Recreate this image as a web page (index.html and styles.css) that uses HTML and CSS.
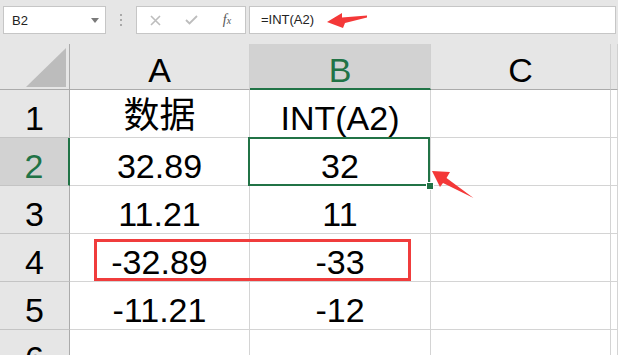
FILE: index.html
```html
<!DOCTYPE html>
<html lang="zh-CN">
<head>
    <meta charset="UTF-8">
    <title>INT 函数</title>
    <link rel="stylesheet" href="styles.css">
</head>
<body>
    <!-- 编辑栏 -->
    <div class="toolbar">
        <div class="namebox">
            <span>B2</span>
            <span class="caret"></span>
        </div>
        <div class="grip"><i></i><i></i><i></i></div>
        <div class="fx-buttons">
            <span class="btn">
                <svg width="11" height="11" viewBox="0 0 11 11"><path d="M1 1L10 10M10 1L1 10" stroke="#bdbdbd" stroke-width="1.6" fill="none"/></svg>
            </span>
            <span class="btn">
                <svg width="13" height="10" viewBox="0 0 13 10"><path d="M1 5L4.5 8.5L12 1" stroke="#bdbdbd" stroke-width="1.8" fill="none"/></svg>
            </span>
            <span class="btn fx">f<sub>x</sub></span>
        </div>
        <div class="formula">=INT(A2)</div>
    </div>

    <!-- 工作表 -->
    <div class="sheet">
        <div class="corner">
            <svg width="40" height="39" viewBox="0 0 40 39"><polygon points="0,39 40,39 40,0" fill="#bcbcbc"/></svg>
        </div>
        <div class="col-head">A</div>
        <div class="col-head on">B</div>
        <div class="col-head">C</div>
        <div class="col-head"></div>

        <div class="row-head">1</div>
        <div class="cell cjk">数据</div>
        <div class="cell">INT(A2)</div>
        <div class="cell"></div>
        <div class="cell"></div>

        <div class="row-head on">2</div>
        <div class="cell">32.89</div>
        <div class="cell active">32</div>
        <div class="cell"></div>
        <div class="cell"></div>

        <div class="row-head">3</div>
        <div class="cell">11.21</div>
        <div class="cell">11</div>
        <div class="cell"></div>
        <div class="cell"></div>

        <div class="row-head">4</div>
        <div class="cell">-32.89</div>
        <div class="cell">-33</div>
        <div class="cell"></div>
        <div class="cell"></div>

        <div class="row-head">5</div>
        <div class="cell">-11.21</div>
        <div class="cell">-12</div>
        <div class="cell"></div>
        <div class="cell"></div>

        <div class="row-head">6</div>
        <div class="cell"></div>
        <div class="cell"></div>
        <div class="cell"></div>
        <div class="cell"></div>
    </div>

    <!-- 标注 -->
    <div class="mark-box"></div>
    <svg class="marks" width="618" height="355" viewBox="0 0 618 355">
        <polygon points="327,22 342,13 342,17.5 367,15.5 367,17.5 345,23 343,28" fill="#f43838"/>
        <polygon points="432,171 450,172 446.5,178 473.5,198 443,183 440,187" fill="#f43838"/>
    </svg>
</body>
</html>
```

FILE: styles.css
```css
body {
    margin: 0;
    overflow: hidden;
    background: #fff;
    font-family: "Liberation Sans", "Noto Sans CJK SC", sans-serif;
}

/* 编辑栏 */
.toolbar {
    display: flex;
    align-items: flex-start;
    height: 44px;
    padding: 6px 2px 0 3px;
    box-sizing: border-box;
    background: #e6e6e6;
}

.namebox,
.fx-buttons,
.formula {
    height: 28px;
    box-sizing: border-box;
    background: #fff;
    border: 1px solid #c6c6c6;
}

.namebox {
    display: flex;
    align-items: center;
    justify-content: space-between;
    width: 103px;
    padding: 0 6px 0 8px;
    font-size: 13px;
    color: #222;
}

.caret {
    width: 0;
    height: 0;
    border-left: 4px solid transparent;
    border-right: 4px solid transparent;
    border-top: 5px solid #7a7a7a;
}

.grip {
    display: flex;
    flex-direction: column;
    align-items: center;
    gap: 3px;
    width: 30px;
    padding-top: 8px;
}

.grip i {
    width: 2px;
    height: 2px;
    background: #a9a9a9;
}

.fx-buttons {
    display: flex;
    width: 110px;
}

.btn {
    display: flex;
    align-items: center;
    justify-content: center;
    width: 36px;
}

.fx {
    font-family: "Liberation Serif", serif;
    font-style: italic;
    font-size: 14px;
    color: #555;
}

.fx sub {
    font-size: 10px;
    vertical-align: -1px;
}

.formula {
    flex: 1;
    margin-left: 3px;
    padding-left: 11px;
    font-size: 13px;
    line-height: 26px;
    color: #222;
}

/* 工作表网格 */
.sheet {
    display: grid;
    grid-template-columns: 70px 180px 181px 180px 1fr;
    grid-template-rows: 46px;
    grid-auto-rows: 48px;
    font-size: 34px;
    color: #000;
}

.sheet > div {
    display: flex;
    align-items: flex-end;
    justify-content: center;
    line-height: 1;
    padding-bottom: 2px;
    box-sizing: border-box;
    white-space: nowrap;
}

.corner {
    background: #e6e6e6;
    border-right: 1px solid #ababab;
    border-bottom: 1px solid #ababab;
    padding: 0 3px 0 0 !important;
    justify-content: flex-end !important;
}

.corner svg {
    display: block;
    margin-bottom: 2px;
}

.col-head {
    background: #e6e6e6;
    border-right: 1px solid #d0d0d0;
    border-bottom: 1px solid #ababab;
}

.col-head.on {
    background: #d2d2d2;
    color: #217346;
    border-bottom: 2px solid #217346;
    padding-bottom: 1px !important;
}

.row-head {
    background: #e6e6e6;
    border-right: 1px solid #ababab;
    border-bottom: 1px solid #c4c4c4;
}

.row-head.on {
    background: #d2d2d2;
    color: #217346;
    border-right: 2px solid #217346;
}

.cell {
    border-right: 1px solid #d4d4d4;
    border-bottom: 1px solid #d4d4d4;
}

.cjk {
    font-size: 36px;
    padding-bottom: 3px !important;
}

/* 当前选中单元格 */
.active {
    position: relative;
}

.active::before {
    content: "";
    position: absolute;
    top: -1px;
    left: -2px;
    right: 0;
    bottom: -1px;
    border: 2px solid #217346;
}

.active::after {
    content: "";
    position: absolute;
    right: -4px;
    bottom: -5px;
    width: 6px;
    height: 6px;
    background: #217346;
    border: 1px solid #fff;
}

/* 红色标注 */
.mark-box {
    position: absolute;
    left: 94px;
    top: 239px;
    width: 317px;
    height: 42px;
    box-sizing: border-box;
    border: 3px solid #f03c3c;
}

.marks {
    position: absolute;
    left: 0;
    top: 0;
    pointer-events: none;
}
```
